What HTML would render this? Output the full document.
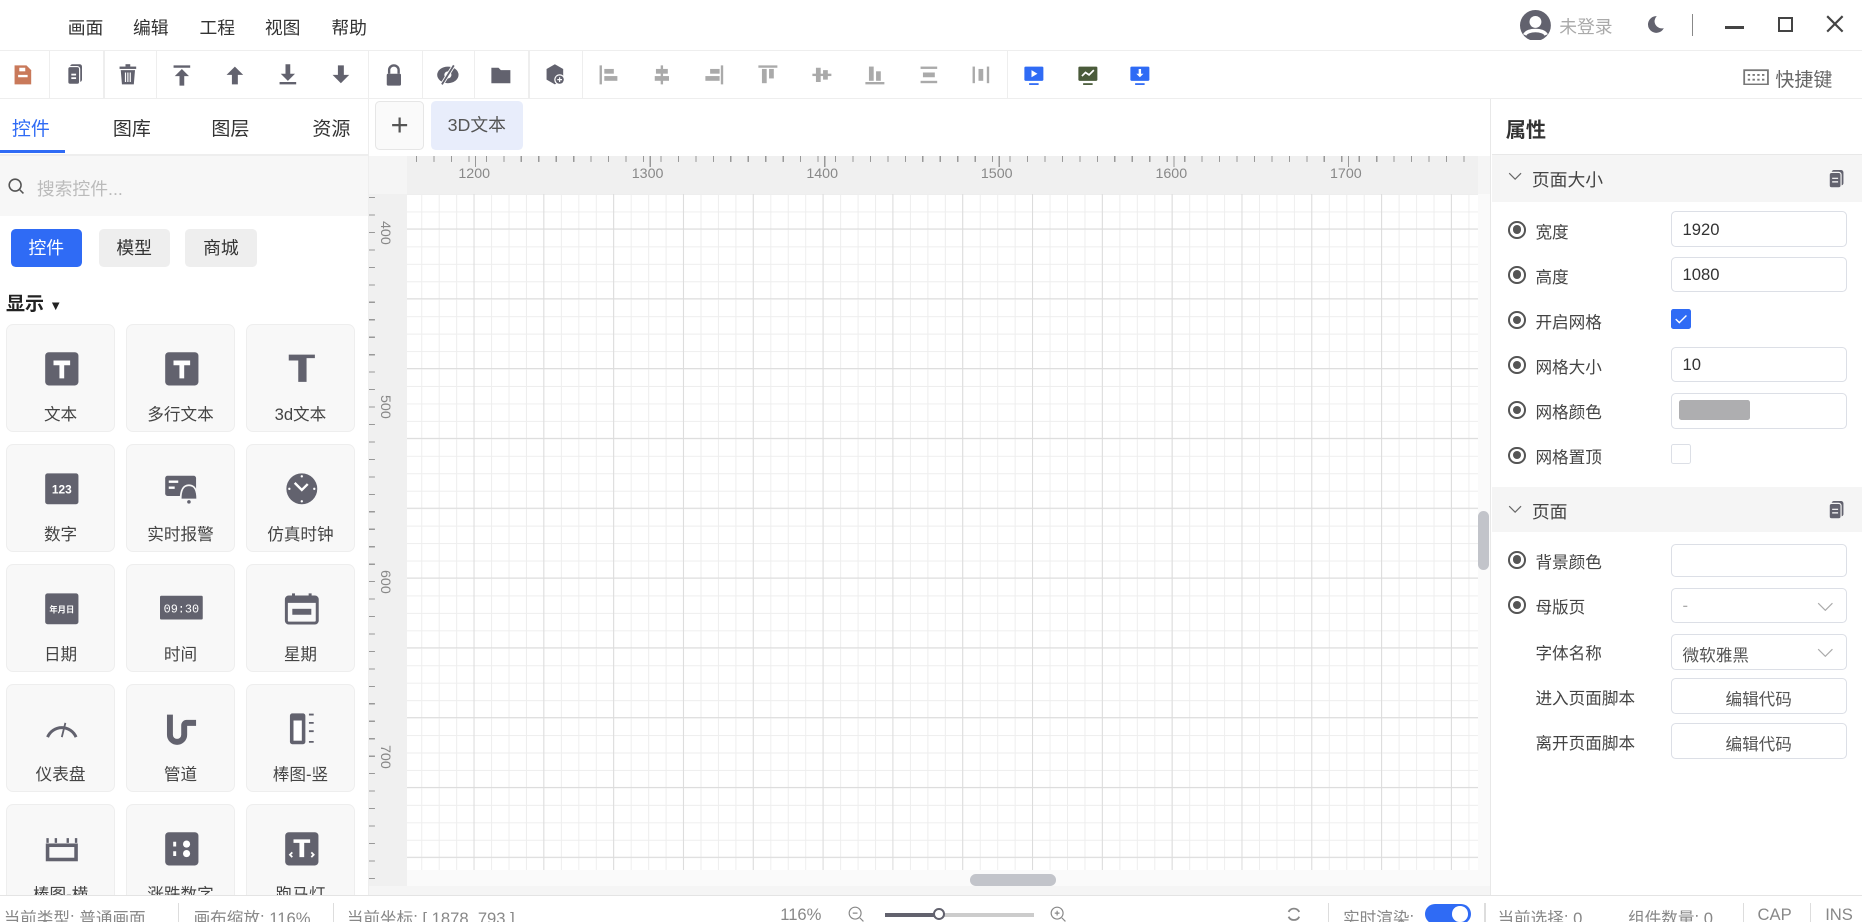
<!DOCTYPE html>
<html><head><meta charset="utf-8"><style>
*{box-sizing:border-box;margin:0;padding:0}
html,body{width:1862px;height:922px;overflow:hidden;background:#fff}
#r{zoom:1.1875;width:1568px;height:776px;position:relative;font-family:"Liberation Sans","Noto Sans CJK SC",sans-serif;color:#333;font-size:14px}
.a{position:absolute}
.menu span{position:absolute;top:12px;font-size:15px;color:#333}
.tb{position:absolute;top:42px;left:0;width:1568px;height:41px;border-top:1px solid #eee;border-bottom:1px solid #eee}
.sep{position:absolute;top:0;width:1px;height:40px;background:#eee}
.ic{position:absolute;top:10px;width:20px;height:20px}
.card{position:absolute;width:92px;height:91px;background:#f8f8f8;border:1px solid #eee;border-radius:6px;text-align:center}
.card .l{position:absolute;top:67px;left:0;width:100%;font-size:14px;color:#444;line-height:16px}
.card svg{position:absolute;top:22px;left:31px}
.row{position:absolute;left:1270px;font-size:14px;color:#444}
.rad{position:absolute;left:1270px;width:15px;height:15px;border:2px solid #555;border-radius:50%}
.rad:after{content:"";position:absolute;left:2px;top:2px;width:7px;height:7px;border-radius:50%;background:#555}
.inp{position:absolute;left:1407px;width:148px;height:30px;border:1px solid #dcdfe6;border-radius:4px;font-size:14px;color:#333;padding:6px 9px}
.st{position:absolute;top:762px;font-size:14px;color:#888;white-space:nowrap}
.vs{position:absolute;top:760px;width:1px;height:16px;background:#ddd}
</style></head><body><div id="r">
<!-- header -->
<div class="menu"><span style="left:57px">画面</span><span style="left:112px">编辑</span><span style="left:168px">工程</span><span style="left:223px">视图</span><span style="left:279px">帮助</span></div>
<svg class="a" style="left:1280px;top:8px" width="26" height="26" viewBox="0 0 26 26"><circle cx="13" cy="13" r="13" fill="#62626e"/><circle cx="13" cy="10" r="5" fill="#fff"/><path d="M4 21c2-5 16-5 18 0" stroke="#fff" stroke-width="3" fill="none"/></svg>
<span class="a" style="left:1313px;top:11px;font-size:15px;color:#aaa">未登录</span>
<svg class="a" style="left:1386px;top:13px" width="16" height="16" viewBox="0 0 16 16"><path d="M9 1a7 7 0 1 0 6 10A6 6 0 0 1 9 1z" fill="#62626e"/></svg>
<div class="a" style="left:1425px;top:12px;width:1px;height:18px;background:#888"></div>
<div class="a" style="left:1453px;top:22px;width:16px;height:2px;background:#444"></div>
<div class="a" style="left:1497px;top:14px;width:13px;height:13px;border:2px solid #444"></div>
<svg class="a" style="left:1538px;top:13px" width="15" height="15" viewBox="0 0 15 15"><path d="M1 1L14 14M14 1L1 14" stroke="#444" stroke-width="1.8"/></svg>
<!-- toolbar -->
<div class="tb">
<div class="sep" style="left:41px"></div><div class="sep" style="left:87px"></div><div class="sep" style="left:131px"></div><div class="sep" style="left:310px"></div><div class="sep" style="left:355px"></div><div class="sep" style="left:399px"></div><div class="sep" style="left:445px"></div><div class="sep" style="left:490px"></div><div class="sep" style="left:848px"></div>
<svg class="ic" style="left:9px" viewBox="0 0 20 20"><path d="M3 2h10l4 4v12H3z" fill="#c9795a"/><rect x="6" y="10" width="8" height="2" fill="#fff"/><rect x="7" y="4" width="5" height="3" fill="#fff"/></svg>
<svg class="ic" style="left:53px" viewBox="0 0 20 20"><rect x="6" y="1" width="10" height="15" rx="2" fill="#62626e"/><rect x="4" y="3" width="10" height="15" rx="2" fill="#62626e" stroke="#fff"/><rect x="7" y="9" width="4" height="1.5" fill="#fff"/><rect x="7" y="12" width="4" height="1.5" fill="#fff"/></svg>
<svg class="ic" style="left:98px" viewBox="0 0 20 20"><rect x="3" y="3" width="14" height="2" fill="#62626e"/><rect x="8" y="1" width="4" height="2" fill="#62626e"/><path d="M4 6h12l-1 12H5z" fill="#62626e"/><path d="M8 8v8M10 8v8M12 8v8" stroke="#fff"/></svg>
<svg class="ic" style="left:143px" viewBox="0 0 20 20"><rect x="3" y="2" width="14" height="2" fill="#62626e"/><path d="M10 5l-6 6h4v8h4v-8h4z" fill="#62626e"/></svg>
<svg class="ic" style="left:188px" viewBox="0 0 20 20"><path d="M10 3l-7 7h4.5v8h5v-8H17z" fill="#62626e"/></svg>
<svg class="ic" style="left:232px" viewBox="0 0 20 20"><path d="M8 1h4v8h4l-6 6-6-6h4z" fill="#62626e"/><rect x="3" y="16" width="14" height="2" fill="#62626e"/></svg>
<svg class="ic" style="left:277px" viewBox="0 0 20 20"><path d="M7.5 2h5v8H17l-7 7-7-7h4.5z" fill="#62626e"/></svg>
<svg class="ic" style="left:322px" viewBox="0 0 20 20"><path d="M6 9V6a4 4 0 0 1 8 0v3" stroke="#62626e" stroke-width="2" fill="none"/><rect x="4" y="9" width="12" height="10" rx="1" fill="#62626e"/></svg>
<svg class="ic" style="left:367px" viewBox="0 0 20 20"><ellipse cx="10" cy="10" rx="9" ry="7" fill="#62626e"/><circle cx="10" cy="10" r="3" fill="#fff"/><path d="M15 2L5 18" stroke="#fff" stroke-width="3"/><path d="M15 2L5 18" stroke="#62626e" stroke-width="1.5"/></svg>
<svg class="ic" style="left:412px" viewBox="0 0 20 20"><path d="M2 4h6l2 2h8v11H2z" fill="#62626e"/></svg>
<svg class="ic" style="left:457px" viewBox="0 0 20 20"><path d="M10 1l7 4v9l-7 4-7-4V5z" fill="#62626e"/><circle cx="14" cy="14" r="4.5" fill="#fff"/><circle cx="14" cy="14" r="3.5" fill="#62626e"/><path d="M12 14h4M14 12v4" stroke="#fff"/></svg>
<g></g>
<svg class="ic" style="left:502px" viewBox="0 0 20 20"><rect x="3" y="2" width="2" height="16" fill="#aaa"/><rect x="7" y="5" width="8" height="4" fill="#aaa"/><rect x="7" y="11" width="11" height="4" fill="#aaa"/></svg>
<svg class="ic" style="left:547px" viewBox="0 0 20 20"><rect x="9" y="2" width="2" height="16" fill="#aaa"/><rect x="5" y="5" width="10" height="4" fill="#aaa"/><rect x="4" y="11" width="12" height="4" fill="#aaa"/></svg>
<svg class="ic" style="left:592px" viewBox="0 0 20 20"><rect x="15" y="2" width="2" height="16" fill="#aaa"/><rect x="6" y="5" width="8" height="4" fill="#aaa"/><rect x="2" y="11" width="12" height="4" fill="#aaa"/></svg>
<svg class="ic" style="left:637px" viewBox="0 0 20 20"><rect x="2" y="2" width="16" height="2" fill="#aaa"/><rect x="5" y="5" width="4" height="12" fill="#aaa"/><rect x="11" y="5" width="4" height="8" fill="#aaa"/></svg>
<svg class="ic" style="left:682px" viewBox="0 0 20 20"><rect x="2" y="9" width="16" height="2" fill="#aaa"/><rect x="5" y="4" width="4" height="12" fill="#aaa"/><rect x="11" y="6" width="4" height="8" fill="#aaa"/></svg>
<svg class="ic" style="left:727px" viewBox="0 0 20 20"><rect x="2" y="16" width="16" height="2" fill="#aaa"/><rect x="5" y="3" width="4" height="12" fill="#aaa"/><rect x="11" y="7" width="4" height="8" fill="#aaa"/></svg>
<svg class="ic" style="left:772px" viewBox="0 0 20 20"><rect x="3" y="3" width="14" height="2" fill="#aaa"/><rect x="5" y="8" width="10" height="4" fill="#aaa"/><rect x="3" y="15" width="14" height="2" fill="#aaa"/></svg>
<svg class="ic" style="left:816px" viewBox="0 0 20 20"><rect x="3" y="3" width="2" height="14" fill="#aaa"/><rect x="8" y="5" width="4" height="10" fill="#aaa"/><rect x="15" y="3" width="2" height="14" fill="#aaa"/></svg>
<svg class="ic" style="left:861px" viewBox="0 0 20 20"><rect x="2" y="3" width="16" height="12" rx="1" fill="#2f6bf5"/><path d="M8 6v6l5-3z" fill="#fff"/><rect x="6" y="17" width="8" height="1.5" fill="#2f6bf5"/></svg>
<svg class="ic" style="left:906px" viewBox="0 0 20 20"><rect x="2" y="3" width="16" height="12" rx="1" fill="#4a5b3a"/><path d="M5 11l3-3 3 2 4-4" stroke="#fff" fill="none" stroke-width="1.4"/><rect x="6" y="17" width="8" height="1.5" fill="#4a5b3a"/></svg>
<svg class="ic" style="left:950px" viewBox="0 0 20 20"><rect x="2" y="3" width="16" height="12" rx="1" fill="#2f6bf5"/><path d="M9 5h2v4h2l-3 3-3-3h2z" fill="#fff"/><rect x="6" y="17" width="8" height="1.5" fill="#2f6bf5"/></svg>
<svg class="a" style="left:1468px;top:15px" width="22" height="14" viewBox="0 0 22 14"><rect x="1" y="1" width="20" height="12" fill="none" stroke="#777" stroke-width="1.5"/><path d="M4 5h2M8 5h2M12 5h2M16 5h2M4 9h14" stroke="#777" stroke-width="1.5" stroke-dasharray="2 2"/></svg>
<span class="a" style="left:1495px;top:12px;font-size:16px;color:#666">快捷键</span>
</div>
<!-- left panel -->
<div class="a" style="left:310px;top:83px;width:1px;height:672px;background:#eee"></div>
<span class="a" style="left:10px;top:96px;font-size:16px;color:#2f6bf5">控件</span>
<span class="a" style="left:95px;top:96px;font-size:16px;color:#333">图库</span>
<span class="a" style="left:178px;top:96px;font-size:16px;color:#333">图层</span>
<span class="a" style="left:263px;top:96px;font-size:16px;color:#333">资源</span>
<div class="a" style="left:0;top:126px;width:55px;height:3px;background:#2f6bf5"></div>
<div class="a" style="left:0;top:130px;width:310px;height:1px;background:#eee"></div>
<div class="a" style="left:0;top:131px;width:310px;height:51px;background:#f7f7f7"></div>
<svg class="a" style="left:7px;top:150px" width="14" height="14" viewBox="0 0 14 14"><circle cx="6" cy="6" r="5" stroke="#555" stroke-width="1.3" fill="none"/><path d="M10 10l3 3" stroke="#555" stroke-width="1.3"/></svg>
<span class="a" style="left:31px;top:147px;font-size:15px;color:#bbb">搜索控件...</span>
<div class="a" style="left:9px;top:193px;width:60px;height:32px;background:#2f6bf5;border-radius:4px;color:#fff;text-align:center;line-height:32px;font-size:15px">控件</div>
<div class="a" style="left:83px;top:193px;width:60px;height:32px;background:#eee;border-radius:4px;color:#333;text-align:center;line-height:32px;font-size:15px">模型</div>
<div class="a" style="left:156px;top:193px;width:60px;height:32px;background:#eee;border-radius:4px;color:#333;text-align:center;line-height:32px;font-size:15px">商城</div>
<span class="a" style="left:5px;top:243px;font-size:16px;font-weight:bold;color:#222">显示 <span style="font-size:11px">▼</span></span>
<div class="a" style="left:0;top:263px;width:310px;height:492px;overflow:hidden">
<div class="card" style="left:5px;top:10px"><svg width="30" height="30" viewBox="0 0 30 30"><rect x="1" y="1" width="28" height="28" rx="3" fill="#62626e"/><path d="M8 8h14v4h-5v11h-4V12H8z" fill="#fff"/></svg><div class="l">文本</div></div>
<div class="card" style="left:106px;top:10px"><svg width="30" height="30" viewBox="0 0 30 30"><rect x="1" y="1" width="28" height="28" rx="3" fill="#62626e"/><path d="M8 8h14v4h-5v11h-4V12H8z" fill="#fff"/></svg><div class="l">多行文本</div></div>
<div class="card" style="left:207px;top:10px"><svg width="30" height="30" viewBox="0 0 30 30"><path d="M4 3h22v3H19v20h-7V8H4z" fill="#62626e"/></svg><div class="l">3d文本</div></div>
<div class="card" style="left:5px;top:111px"><svg width="30" height="30" viewBox="0 0 30 30"><rect x="1" y="2" width="28" height="26" rx="2" fill="#62626e"/><text x="15" y="19" fill="#fff" font-size="10" font-weight="bold" text-anchor="middle" font-family="Liberation Sans">123</text></svg><div class="l">数字</div></div>
<div class="card" style="left:106px;top:111px"><svg width="30" height="30" viewBox="0 0 30 30"><rect x="1" y="4" width="26" height="17" rx="2" fill="#62626e"/><path d="M4 9h8M4 14h5" stroke="#fff" stroke-width="2"/><path d="M14 24c0-8 2-12 7-12s7 4 7 12z" fill="#62626e" stroke="#f8f8f8" stroke-width="1.5"/><circle cx="21" cy="26" r="1.5" fill="#62626e"/></svg><div class="l">实时报警</div></div>
<div class="card" style="left:207px;top:111px"><svg width="30" height="30" viewBox="0 0 30 30"><circle cx="15" cy="15" r="13" fill="#62626e"/><path d="M9 10l6 6 5-5" stroke="#fff" stroke-width="2" fill="none"/><circle cx="15" cy="4.5" r="1" fill="#fff"/><circle cx="15" cy="25.5" r="1" fill="#fff"/><circle cx="4.5" cy="15" r="1" fill="#fff"/><circle cx="25.5" cy="15" r="1" fill="#fff"/></svg><div class="l">仿真时钟</div></div>
<div class="card" style="left:5px;top:212px"><svg width="30" height="30" viewBox="0 0 30 30"><rect x="1" y="2" width="28" height="26" rx="2" fill="#62626e"/><text x="15" y="18" fill="#fff" font-size="7" font-weight="bold" text-anchor="middle" font-family="Noto Sans CJK SC">年月日</text></svg><div class="l">日期</div></div>
<div class="card" style="left:106px;top:212px"><svg width="36" height="30" viewBox="0 0 36 30" style="left:28px"><rect x="0" y="4" width="36" height="20" rx="1" fill="#62626e"/><text x="18" y="18" fill="#fff" font-size="10" text-anchor="middle" font-family="Liberation Mono">09:30</text></svg><div class="l">时间</div></div>
<div class="card" style="left:207px;top:212px"><svg width="30" height="30" viewBox="0 0 30 30"><rect x="2" y="5" width="26" height="22" rx="2" fill="none" stroke="#62626e" stroke-width="2.5"/><rect x="2" y="5" width="26" height="5" fill="#62626e"/><path d="M8 2v6M22 2v6" stroke="#62626e" stroke-width="2.5"/><rect x="7" y="15" width="16" height="5" fill="#62626e"/></svg><div class="l">星期</div></div>
<div class="card" style="left:5px;top:313px"><svg width="30" height="30" viewBox="0 0 30 30"><path d="M3 22A13 13 0 0 1 27 22" stroke="#62626e" stroke-width="2.5" fill="none"/><path d="M15 22l3-12" stroke="#62626e" stroke-width="1.5"/></svg><div class="l">仪表盘</div></div>
<div class="card" style="left:106px;top:313px"><svg width="30" height="30" viewBox="0 0 30 30"><path d="M5 3v17a6 6 0 0 0 12 0v-8a2 2 0 0 1 2-2h8" stroke="#62626e" stroke-width="5" fill="none"/></svg><div class="l">管道</div></div>
<div class="card" style="left:207px;top:313px"><svg width="30" height="30" viewBox="0 0 30 30"><rect x="5" y="2" width="13" height="26" rx="2" fill="#62626e"/><rect x="8" y="8" width="7" height="17" fill="#fff"/><path d="M21 3h4M21 10h4M21 17h4M21 26h4" stroke="#62626e" stroke-width="1.5"/></svg><div class="l">棒图-竖</div></div>
<div class="card" style="left:5px;top:414px"><svg width="30" height="30" viewBox="0 0 30 30"><path d="M3 6v4M10 6v4M20 6v4M27 6v4" stroke="#62626e" stroke-width="2"/><rect x="3" y="12" width="24" height="12" fill="none" stroke="#62626e" stroke-width="3"/></svg><div class="l">棒图-横</div></div>
<div class="card" style="left:106px;top:414px"><svg width="30" height="30" viewBox="0 0 30 30"><rect x="1" y="1" width="28" height="28" rx="3" fill="#62626e"/><path d="M9 9v4M9 17v4" stroke="#fff" stroke-width="2.5"/><circle cx="19" cy="11" r="3" fill="#fff"/><circle cx="19" cy="19" r="3" fill="#fff"/></svg><div class="l">涨跌数字</div></div>
<div class="card" style="left:207px;top:414px"><svg width="30" height="30" viewBox="0 0 30 30"><rect x="1" y="1" width="28" height="28" rx="3" fill="#62626e"/><path d="M8 7h14v3h-5v12h-4V10H8z" fill="#fff"/><path d="M7 18l-2 2 2 2M23 18l2 2-2 2" stroke="#fff" stroke-width="1.5" fill="none"/></svg><div class="l">跑马灯</div></div>
</div>
<!-- canvas tabs -->
<div class="a" style="left:316px;top:85px;width:41px;height:41px;border:1px solid #e6e6e6;border-radius:4px;background:#fafafa;text-align:center;line-height:38px;font-size:26px;color:#555">+</div>
<div class="a" style="left:363px;top:85px;width:77px;height:41px;background:#e8edfb;border-radius:4px;text-align:center;line-height:41px;font-size:15px;color:#555">3D文本</div>
<!-- rulers -->
<div class="a" style="left:311px;top:131px;width:944px;height:624px;background:#f5f5f5"></div>
<div class="a" style="left:343px;top:131px;width:902px;height:32px;background:#f0f0f0;background-image:repeating-linear-gradient(90deg,#999 0 1px,transparent 1px 14.7px);background-size:100% 5px;background-repeat:no-repeat;background-position:7px 0"></div>
<div class="a" style="left:311px;top:163px;width:32px;height:583px;background:#f0f0f0;background-image:repeating-linear-gradient(180deg,#999 0 1px,transparent 1px 14.7px);background-size:5px 100%;background-repeat:no-repeat;background-position:0 3px"></div>
<div class="a" style="left:343px;top:131px;width:902px;height:10px;background-image:repeating-linear-gradient(90deg,#999 0 1px,transparent 1px 147px);background-size:100% 10px;background-repeat:no-repeat;background-position:57px 0"></div>
<span class="a" style="left:386px;top:140px;font-size:12px;color:#888">1200</span>
<span class="a" style="left:532px;top:140px;font-size:12px;color:#888">1300</span>
<span class="a" style="left:679px;top:140px;font-size:12px;color:#888">1400</span>
<span class="a" style="left:826px;top:140px;font-size:12px;color:#888">1500</span>
<span class="a" style="left:973px;top:140px;font-size:12px;color:#888">1600</span>
<span class="a" style="left:1120px;top:140px;font-size:12px;color:#888">1700</span>
<span class="a" style="left:315px;top:186px;font-size:12px;color:#888;transform:rotate(90deg);transform-origin:left top;left:331px">400</span>
<span class="a" style="top:333px;font-size:12px;color:#888;transform:rotate(90deg);transform-origin:left top;left:331px">500</span>
<span class="a" style="top:480px;font-size:12px;color:#888;transform:rotate(90deg);transform-origin:left top;left:331px">600</span>
<span class="a" style="top:627px;font-size:12px;color:#888;transform:rotate(90deg);transform-origin:left top;left:331px">700</span>
<!-- grid -->
<div class="a" style="left:343px;top:163px;width:902px;height:570px;background-color:#fff;background-image:linear-gradient(90deg,#dcdcdc 1px,transparent 1px),linear-gradient(180deg,#dcdcdc 1px,transparent 1px),linear-gradient(90deg,#eeeeee 1px,transparent 1px),linear-gradient(180deg,#eeeeee 1px,transparent 1px);background-size:58.8px 58.8px,58.8px 58.8px,14.7px 14.7px,14.7px 14.7px;background-position:56px 29px,56px 29px,12px 0px,12px 0px"></div>
<div class="a" style="left:343px;top:733px;width:902px;height:13px;background:#fafafa"></div>
<div class="a" style="left:817px;top:736px;width:72px;height:10px;border-radius:5px;background:#c2c4ca"></div>
<div class="a" style="left:1245px;top:163px;width:10px;height:583px;background:#fafafa"></div>
<div class="a" style="left:1245px;top:430px;width:9px;height:50px;border-radius:5px;background:#c2c4ca"></div>
<!-- right panel -->
<div class="a" style="left:1255px;top:83px;width:313px;height:672px;background:#fff;border-left:1px solid #e8e8e8"></div>
<span class="a" style="left:1268px;top:96px;font-size:17px;font-weight:bold;color:#333">属性</span>
<div class="a" style="left:1256px;top:130px;width:312px;height:40px;background:#f5f5f5;border-top:1px solid #e8e8e8"></div>
<svg class="a" style="left:1270px;top:145px" width="12" height="8" viewBox="0 0 12 8"><path d="M1 1l5 5 5-5" stroke="#666" fill="none"/></svg>
<span class="a" style="left:1290px;top:140px;font-size:15px;color:#444">页面大小</span>
<svg class="a" style="left:1539px;top:143px" width="14" height="16" viewBox="0 0 14 16"><rect x="3" y="0" width="10" height="13" rx="2" fill="#62626e"/><rect x="1" y="2" width="10" height="13" rx="2" fill="#62626e" stroke="#f5f5f5"/><path d="M3.5 7h5M3.5 10h5" stroke="#fff"/></svg>
<div class="rad" style="top:186px"></div><span class="row" style="left:1293px;top:184px">宽度</span><div class="inp" style="top:178px">1920</div>
<div class="rad" style="top:224px"></div><span class="row" style="left:1293px;top:222px">高度</span><div class="inp" style="top:216px">1080</div>
<div class="rad" style="top:262px"></div><span class="row" style="left:1293px;top:260px">开启网格</span>
<div class="a" style="left:1407px;top:260px;width:17px;height:17px;background:#2f6bf5;border-radius:2px"><svg width="17" height="17" viewBox="0 0 17 17"><path d="M4 8.5l3 3 6-6" stroke="#fff" fill="none" stroke-width="1.2"/></svg></div>
<div class="rad" style="top:300px"></div><span class="row" style="left:1293px;top:298px">网格大小</span><div class="inp" style="top:292px">10</div>
<div class="rad" style="top:338px"></div><span class="row" style="left:1293px;top:336px">网格颜色</span><div class="inp" style="top:331px;padding:5px 6px"><div style="width:60px;height:17px;background:#aeaeb0;border-radius:2px"></div></div>
<div class="rad" style="top:376px"></div><span class="row" style="left:1293px;top:374px">网格置顶</span>
<div class="a" style="left:1407px;top:374px;width:17px;height:17px;border:1px solid #dcdfe6;border-radius:2px"></div>
<div class="a" style="left:1256px;top:410px;width:312px;height:38px;background:#f5f5f5"></div>
<svg class="a" style="left:1270px;top:425px" width="12" height="8" viewBox="0 0 12 8"><path d="M1 1l5 5 5-5" stroke="#666" fill="none"/></svg>
<span class="a" style="left:1290px;top:419px;font-size:15px;color:#444">页面</span>
<svg class="a" style="left:1539px;top:422px" width="14" height="16" viewBox="0 0 14 16"><rect x="3" y="0" width="10" height="13" rx="2" fill="#62626e"/><rect x="1" y="2" width="10" height="13" rx="2" fill="#62626e" stroke="#f5f5f5"/><path d="M3.5 7h5M3.5 10h5" stroke="#fff"/></svg>
<div class="rad" style="top:464px"></div><span class="row" style="left:1293px;top:462px">背景颜色</span><div class="inp" style="top:458px;height:28px"></div>
<div class="rad" style="top:502px"></div><span class="row" style="left:1293px;top:500px">母版页</span><div class="inp" style="top:495px;color:#aaa">-<svg style="position:absolute;right:10px;top:11px" width="14" height="8" viewBox="0 0 14 8"><path d="M1 1l6 6 6-6" stroke="#aaa" fill="none"/></svg></div>
<span class="row" style="left:1293px;top:539px">字体名称</span><div class="inp" style="top:534px;color:#555">微软雅黑<svg style="position:absolute;right:10px;top:11px" width="14" height="8" viewBox="0 0 14 8"><path d="M1 1l6 6 6-6" stroke="#aaa" fill="none"/></svg></div>
<span class="row" style="left:1293px;top:615px">离开页面脚本</span><div class="inp" style="top:609px;text-align:center;color:#555">编辑代码</div>
<span class="row" style="left:1293px;top:577px">进入页面脚本</span><div class="inp" style="top:571px;text-align:center;color:#555">编辑代码</div>
<!-- status bar -->
<div class="a" style="left:0;top:754px;width:1568px;height:22px;background:#fff;border-top:1px solid #e4e4e4"></div>
<span class="st" style="left:3px">当前类型: 普通画面</span><div class="vs" style="left:150px"></div>
<span class="st" style="left:163px">画布缩放: 116%</span><div class="vs" style="left:280px"></div>
<span class="st" style="left:292px">当前坐标: [ 1878, 793 ]</span>
<span class="st" style="left:657px">116%</span>
<svg class="a" style="left:714px;top:763px" width="14" height="14" viewBox="0 0 14 14"><circle cx="6" cy="6" r="5" stroke="#888" fill="none"/><path d="M4 6h4M10 10l3 3" stroke="#888"/></svg>
<div class="a" style="left:745px;top:769px;width:46px;height:3px;background:#62626e"></div>
<div class="a" style="left:791px;top:769px;width:80px;height:3px;background:#ccc"></div>
<div class="a" style="left:786px;top:765px;width:10px;height:10px;border-radius:50%;background:#fff;border:2px solid #62626e"></div>
<svg class="a" style="left:884px;top:763px" width="14" height="14" viewBox="0 0 14 14"><circle cx="6" cy="6" r="5" stroke="#888" fill="none"/><path d="M4 6h4M6 4v4M10 10l3 3" stroke="#888"/></svg>
<svg class="a" style="left:1082px;top:763px" width="15" height="14" viewBox="0 0 15 14"><path d="M12 5A5 5 0 0 0 3 5M3 9a5 5 0 0 0 9 0" stroke="#888" fill="none" stroke-width="1.5"/></svg>
<div class="vs" style="left:1118px"></div>
<span class="st" style="left:1131px">实时渲染:</span>
<div class="a" style="left:1200px;top:761px;width:39px;height:17px;border-radius:9px;background:#2f6bf5"><div style="position:absolute;right:3px;top:2px;width:13px;height:13px;border-radius:50%;background:#fff"></div></div>
<div class="vs" style="left:1250px"></div>
<span class="st" style="left:1261px">当前选择: 0</span>
<span class="st" style="left:1371px">组件数量: 0</span><div class="vs" style="left:1468px"></div>
<span class="st" style="left:1480px">CAP</span><div class="vs" style="left:1524px"></div>
<span class="st" style="left:1537px">INS</span>
</div></body></html>
